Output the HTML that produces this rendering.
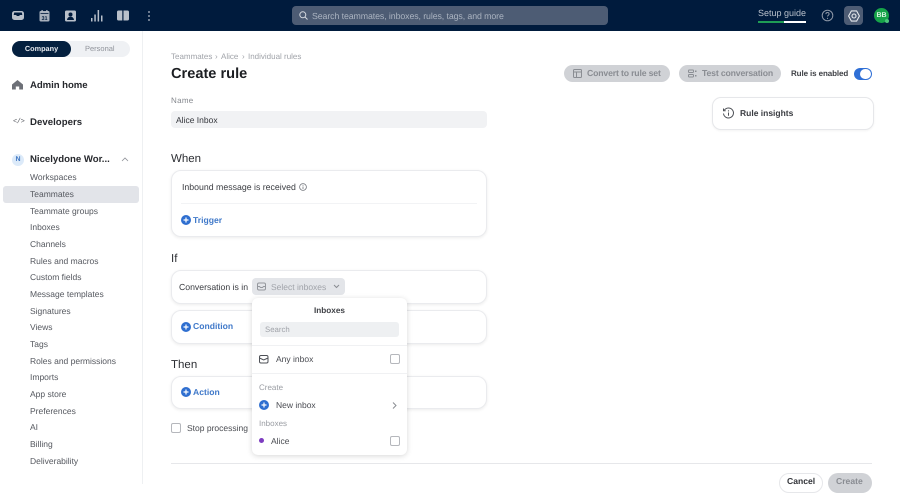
<!DOCTYPE html>
<html><head><meta charset="utf-8">
<style>
html,body{margin:0;padding:0;width:900px;height:484px;overflow:hidden;background:#fff;font-family:"Liberation Sans",sans-serif;color:#27292e;text-rendering:geometricPrecision}
*{box-sizing:border-box}
.a{position:absolute}
.t{position:absolute;white-space:nowrap;line-height:12px}
.nav{font-size:8.500px;color:#55585f;left:30px}
.h{font-size:11.500px;color:#2c2e33;left:171px;line-height:14px;font-weight:500}
.card{position:absolute;left:171px;width:316px;background:#fff;border:1px solid #eaebee;border-radius:10px;box-shadow:0 1px 3px rgba(0,0,0,.08)}
.pill{position:absolute;top:65px;height:17px;border-radius:9px;background:#d0d2d6}
.blue{color:#4079c9;font-size:8.600px;font-weight:bold}
.cb{position:absolute;width:10px;height:10px;border:1px solid #b5b7bc;border-radius:2px;background:#fff}
svg{position:absolute;display:block}
</style></head><body>
<div class="a" style="left:0;top:0;width:900px;height:31px;background:#001b3d"></div>

<svg style="left:12px;top:10px" width="12" height="11" viewBox="0 0 12 11"><rect x="0" y="1" width="12" height="9" rx="2.500" fill="#b9c0ca"/><path d="M2.200 2.500h7.600l.5 2.500H8L7 6H5L4 5H1.700z" fill="#001b3d"/></svg>
<svg style="left:39px;top:10px" width="11" height="12" viewBox="0 0 11 12"><rect x=".5" y="1" width="10" height="10.500" rx="1.200" fill="#a9b1bd"/><rect x="1.500" y="3" width="8" height=".8" fill="#001b3d"/><rect x="2.500" y="0" width="1.200" height="2" fill="#b9c0ca"/><rect x="7.300" y="0" width="1.200" height="2" fill="#b9c0ca"/><text x="5.500" y="10" text-anchor="middle" font-size="5.500" font-weight="bold" fill="#001b3d" font-family="Liberation Sans">31</text></svg>
<svg style="left:65px;top:10px" width="11" height="12" viewBox="0 0 11 12"><rect x="0" y=".5" width="11" height="11" rx="1.500" fill="#b9c0ca"/><circle cx="5.500" cy="4.500" r="2" fill="#001b3d"/><path d="M2 10c.3-2.400 1.700-3.300 3.500-3.300S8.700 7.600 9 10z" fill="#001b3d"/></svg>
<svg style="left:91px;top:9px" width="12" height="13" viewBox="0 0 12 13"><rect x="0" y="9" width="1.500" height="3.500" fill="#b9c0ca"/><rect x="3.300" y="5.500" width="1.500" height="7" fill="#b9c0ca"/><rect x="6.600" y="1" width="1.500" height="11.500" fill="#b9c0ca"/><rect x="10" y="6.500" width="1.500" height="6" fill="#b9c0ca"/></svg>
<svg style="left:117px;top:10px" width="12" height="11" viewBox="0 0 12 11"><path d="M0 2c0-1 .6-1.500 1.500-1.500h3.800v10H1.500C.6 10.500 0 10 0 9zM6.500.5h4c.9 0 1.500.5 1.500 1.500v7c0 1-.6 1.500-1.500 1.500h-4z" fill="#b9c0ca"/></svg>
<svg style="left:147px;top:11px" width="4" height="10" viewBox="0 0 4 10"><circle cx="2" cy="1" r=".9" fill="#b9c0ca"/><circle cx="2" cy="5" r=".9" fill="#b9c0ca"/><circle cx="2" cy="9" r=".9" fill="#b9c0ca"/></svg>

<div class="a" style="left:292px;top:6px;width:316px;height:19px;background:#4d5c74;border-radius:4px"></div>
<svg style="left:299px;top:11px" width="9" height="9" viewBox="0 0 9 9"><circle cx="3.800" cy="3.800" r="3" fill="none" stroke="#d5d9df" stroke-width="1"/><path d="M6 6l2.500 2.500" stroke="#d5d9df" stroke-width="1"/></svg>
<div class="t" style="left:312px;top:9.500px;font-size:8.800px;color:#aab3c0;letter-spacing:-.1px">Search teammates, inboxes, rules, tags, and more</div>

<div class="t" style="left:758px;top:7px;font-size:9px;color:#b8c0cb">Setup guide</div>
<div class="a" style="left:758px;top:20.500px;width:26px;height:2px;background:#1f9d55"></div>
<div class="a" style="left:784px;top:20.500px;width:22px;height:2px;background:#fff"></div>
<svg style="left:821px;top:9px" width="13" height="13" viewBox="0 0 13 13"><circle cx="6.500" cy="6.500" r="5.300" fill="none" stroke="#8d97a6"/><path d="M4.900 5.100c0-1 .7-1.600 1.600-1.600s1.600.6 1.600 1.500c0 1.300-1.600 1.300-1.600 2.500" fill="none" stroke="#8d97a6"/><circle cx="6.500" cy="9.400" r=".6" fill="#8d97a6"/></svg>
<div class="a" style="left:844px;top:6px;width:19px;height:19px;border-radius:4px;background:#4d5c74"></div>
<svg style="left:848px;top:10px" width="12" height="12" viewBox="0 0 12 12"><path d="M3.400.9h5.200L11.400 6 8.600 11.100H3.400L.6 6z" fill="none" stroke="#e6e9ed" stroke-width="1.100" stroke-linejoin="round"/><circle cx="6" cy="6" r="2" fill="none" stroke="#e6e9ed" stroke-width="1.100"/></svg>
<div class="a" style="left:874px;top:8px;width:15px;height:15px;border-radius:50%;background:#16a349;color:#d9f4e2;font-size:7px;font-weight:bold;text-align:center;line-height:15px">BB</div>
<div class="a" style="left:884.500px;top:19px;width:4px;height:4px;border-radius:50%;background:#4cc47a"></div>

<div class="a" style="left:142px;top:31px;width:1px;height:453px;background:#eef0f2"></div>
<div class="a" style="left:12px;top:41px;width:118px;height:16px;border-radius:8px;background:#eff1f4"></div>
<div class="a" style="left:12px;top:41px;width:59px;height:16px;border-radius:8px;background:#04203f;color:#e6e9ee;font-size:7.300px;font-weight:bold;text-align:center;line-height:16px">Company</div>
<div class="t" style="left:85px;top:43px;font-size:7.500px;color:#8f939a">Personal</div>

<svg style="left:12px;top:79px" width="11" height="11" viewBox="0 0 11 11"><path d="M5.500 1L11 5.500V10.500H7.200V7.500H3.800v3H0V5.500z" fill="#6d7077"/></svg>
<div class="t" style="left:30px;top:79.500px;font-size:9.600px;font-weight:bold;color:#26282d;letter-spacing:-.06px">Admin home</div>
<div class="t" style="left:13px;top:116px;font-size:7px;color:#55585f;font-family:'Liberation Mono',monospace;letter-spacing:-.4px">&lt;/&gt;</div>
<div class="t" style="left:30px;top:116.500px;font-size:9.600px;font-weight:bold;color:#26282d;letter-spacing:.04px">Developers</div>
<div class="a" style="left:12px;top:154px;width:12px;height:12px;border-radius:50%;background:#dceaf9;color:#3f76c2;font-size:7px;font-weight:bold;text-align:center;line-height:12px">N</div>
<div class="t" style="left:30px;top:154px;font-size:9.600px;font-weight:bold;color:#26282d">Nicelydone Wor...</div>
<svg style="left:121px;top:157px" width="8" height="5" viewBox="0 0 8 5"><path d="M1 4l3-3 3 3" fill="none" stroke="#8f9298" stroke-width=".8"/></svg>

<div class="a" style="left:3px;top:186px;width:136px;height:17px;border-radius:3px;background:#e2e4e9"></div>
<div class="t nav" style="top:171px">Workspaces</div>
<div class="t nav" style="top:188px">Teammates</div>
<div class="t nav" style="top:205px">Teammate groups</div>
<div class="t nav" style="top:221px">Inboxes</div>
<div class="t nav" style="top:238px">Channels</div>
<div class="t nav" style="top:255px">Rules and macros</div>
<div class="t nav" style="top:271px">Custom fields</div>
<div class="t nav" style="top:288px">Message templates</div>
<div class="t nav" style="top:305px">Signatures</div>
<div class="t nav" style="top:321px">Views</div>
<div class="t nav" style="top:338px">Tags</div>
<div class="t nav" style="top:355px">Roles and permissions</div>
<div class="t nav" style="top:371px">Imports</div>
<div class="t nav" style="top:388px">App store</div>
<div class="t nav" style="top:405px">Preferences</div>
<div class="t nav" style="top:421px">AI</div>
<div class="t nav" style="top:438px">Billing</div>
<div class="t nav" style="top:455px">Deliverability</div>

<div class="t" style="left:171px;top:51px;font-size:8px;color:#a0a3a9">Teammates</div>
<div class="t" style="left:215px;top:51px;font-size:8px;color:#a0a3a9">›</div>
<div class="t" style="left:221px;top:51px;font-size:8px;color:#a0a3a9">Alice</div>
<div class="t" style="left:242px;top:51px;font-size:8px;color:#a0a3a9">›</div>
<div class="t" style="left:248px;top:51px;font-size:8px;color:#a0a3a9">Individual rules</div>
<div class="t" style="left:171px;top:66px;font-size:14.600px;font-weight:bold;color:#1c1e22;line-height:16px">Create rule</div>

<div class="pill" style="left:564px;width:106px"></div>
<svg style="left:573px;top:69px" width="9" height="9" viewBox="0 0 9 9"><rect x=".5" y=".5" width="8" height="8" rx="1" fill="none" stroke="#8a8d93"/><path d="M.5 3h8M3.500 3v5.500" stroke="#8a8d93"/></svg>
<div class="t" style="left:587px;top:67px;font-size:8.700px;font-weight:bold;color:#8a8d93;letter-spacing:-.16px">Convert to rule set</div>
<div class="pill" style="left:679px;width:102px"></div>
<svg style="left:688px;top:69px" width="9" height="9" viewBox="0 0 9 9"><rect x=".5" y="1" width="5" height="2.500" rx=".7" fill="none" stroke="#8a8d93"/><rect x=".5" y="5.500" width="5" height="2.500" rx=".7" fill="none" stroke="#8a8d93"/><rect x="7" y="1.500" width="1.500" height="1.500" fill="#8a8d93"/><rect x="7" y="6" width="1.500" height="1.500" fill="#8a8d93"/></svg>
<div class="t" style="left:702px;top:67px;font-size:8.700px;font-weight:bold;color:#8a8d93;letter-spacing:-.16px">Test conversation</div>
<div class="t" style="left:791px;top:67.500px;font-size:8px;font-weight:bold;color:#3f4146;letter-spacing:-.1px">Rule is enabled</div>
<div class="a" style="left:854px;top:67.500px;width:18px;height:12px;border-radius:6px;background:#2f6fd6"></div>
<div class="a" style="left:860px;top:68.500px;width:10.500px;height:10px;border-radius:5px;background:#fff"></div>

<div class="a" style="left:712px;top:97px;width:162px;height:33px;border:1px solid #e6e7ea;border-radius:9px;background:#fff;box-shadow:0 1px 2px rgba(0,0,0,.05)"></div>
<svg style="left:722px;top:107px" width="13" height="13" viewBox="0 0 13 13"><path d="M2.300 3.200A5 5 0 1 1 1.500 6.500" fill="none" stroke="#4d5056"/><path d="M1.500 1.500v2.200h2.200" fill="none" stroke="#4d5056"/><path d="M6.500 5.500v3.200" stroke="#4d5056"/><circle cx="6.500" cy="3.900" r=".6" fill="#4d5056"/></svg>
<div class="t" style="left:740px;top:107px;font-size:8.500px;font-weight:bold;color:#3a3c41">Rule insights</div>

<div class="t" style="left:171px;top:95px;font-size:8px;color:#85888e;letter-spacing:.3px">Name</div>
<div class="a" style="left:171px;top:111px;width:316px;height:17px;border-radius:4px;background:#f1f2f4"></div>
<div class="t" style="left:176px;top:114px;font-size:8.500px;color:#35373c">Alice Inbox</div>

<div class="t h" style="top:152px">When</div>
<div class="card" style="top:170px;height:67px"></div>
<div class="t" style="left:182px;top:181px;font-size:8.750px;color:#3a3c41">Inbound message is received</div>
<svg style="left:299px;top:183px" width="8" height="8" viewBox="0 0 8 8"><circle cx="4" cy="4" r="3.400" fill="none" stroke="#70737a" stroke-width=".8"/><path d="M4 3.500v2.500" stroke="#70737a" stroke-width=".8"/><circle cx="4" cy="2.300" r=".5" fill="#70737a"/></svg>
<div class="a" style="left:181px;top:203px;width:296px;height:1px;background:#f2f3f5"></div>
<svg style="left:181px;top:215px" width="10" height="10" viewBox="0 0 10 10"><circle cx="5" cy="5" r="5" fill="#2f6fd0"/><path d="M5 2.500v5M2.500 5h5" stroke="#fff" stroke-width="1.200"/></svg>
<div class="t blue" style="left:193px;top:214px">Trigger</div>

<div class="t h" style="top:252px">If</div>
<div class="card" style="top:270px;height:34px"></div>
<div class="t" style="left:179px;top:281px;font-size:8.700px;color:#3a3c41">Conversation is in</div>
<div class="a" style="left:252px;top:278px;width:93px;height:17px;border-radius:4px;background:#e3e5e9"></div>
<svg style="left:257px;top:282px" width="9" height="9" viewBox="0 0 9 9"><rect x=".5" y="1" width="8" height="7" rx="1.500" fill="none" stroke="#94979d"/><path d="M.5 4.500h2l1 1h2l1-1h2" fill="none" stroke="#94979d"/></svg>
<div class="t" style="left:271px;top:281px;font-size:8.500px;color:#a0a3a9">Select inboxes</div>
<svg style="left:333px;top:284px" width="7" height="5" viewBox="0 0 7 5"><path d="M1 1l2.500 2.500L6 1" fill="none" stroke="#8a8d93"/></svg>

<div class="card" style="top:310px;height:34px"></div>
<svg style="left:181px;top:322px" width="10" height="10" viewBox="0 0 10 10"><circle cx="5" cy="5" r="5" fill="#2f6fd0"/><path d="M5 2.500v5M2.500 5h5" stroke="#fff" stroke-width="1.200"/></svg>
<div class="t blue" style="left:193px;top:320px">Condition</div>

<div class="t h" style="top:358px">Then</div>
<div class="card" style="top:376px;height:33px"></div>
<svg style="left:181px;top:387px" width="10" height="10" viewBox="0 0 10 10"><circle cx="5" cy="5" r="5" fill="#2f6fd0"/><path d="M5 2.500v5M2.500 5h5" stroke="#fff" stroke-width="1.200"/></svg>
<div class="t blue" style="left:193px;top:386px">Action</div>

<div class="cb" style="left:171px;top:423px"></div>
<div class="t" style="left:187px;top:422px;font-size:8.500px;color:#4a4c52">Stop processing</div>

<div class="a" style="left:171px;top:463px;width:701px;height:1px;background:#e6e7ea"></div>
<div class="a" style="left:779px;top:473px;width:44px;height:20px;border:1px solid #e6e7ea;border-radius:10px;background:#fff"></div>
<div class="t" style="left:787px;top:475px;font-size:8.600px;font-weight:bold;color:#33353a">Cancel</div>
<div class="a" style="left:828px;top:473px;width:44px;height:20px;border-radius:10px;background:#d0d2d6"></div>
<div class="t" style="left:836px;top:475px;font-size:8.600px;font-weight:bold;color:#8a8d93">Create</div>

<div class="a" style="left:252px;top:298px;width:155px;height:157px;background:#fff;border-radius:6px;box-shadow:0 1px 6px rgba(0,0,0,.16)"></div>
<div class="t" style="left:252px;top:304.500px;width:155px;text-align:center;font-size:8.200px;font-weight:bold;color:#3f4146">Inboxes</div>
<div class="a" style="left:260px;top:322px;width:139px;height:15px;border-radius:3px;background:#eef0f2"></div>
<div class="t" style="left:265px;top:324px;font-size:7.800px;color:#a0a3a9">Search</div>
<div class="a" style="left:252px;top:345px;width:155px;height:1px;background:#f0f1f3"></div>
<svg style="left:259px;top:354px" width="10" height="10" viewBox="0 0 10 10"><rect x=".5" y="1.500" width="8.500" height="7.500" rx="1.500" fill="none" stroke="#4d5056"/><path d="M.5 4l4.200 2L9 4" fill="none" stroke="#4d5056"/></svg>
<div class="t" style="left:276px;top:353px;font-size:8.500px;color:#4a4c52">Any inbox</div>
<div class="cb" style="left:390px;top:354px"></div>
<div class="a" style="left:252px;top:373px;width:155px;height:1px;background:#f0f1f3"></div>
<div class="t" style="left:259px;top:381.500px;font-size:8px;color:#9a9da3">Create</div>
<svg style="left:259px;top:400px" width="10" height="10" viewBox="0 0 10 10"><circle cx="5" cy="5" r="5" fill="#2f6fd0"/><path d="M5 2.500v5M2.500 5h5" stroke="#fff" stroke-width="1.200"/></svg>
<div class="t" style="left:276px;top:399px;font-size:8.500px;color:#4a4c52">New inbox</div>
<svg style="left:392px;top:402px" width="5" height="7" viewBox="0 0 5 7"><path d="M1 .5l3 3-3 3" fill="none" stroke="#8a8d93"/></svg>
<div class="t" style="left:259px;top:417.500px;font-size:8px;color:#9a9da3">Inboxes</div>
<div class="a" style="left:259px;top:438px;width:5px;height:5px;border-radius:50%;background:#7d3cc0"></div>
<div class="t" style="left:271px;top:435px;font-size:8.500px;color:#4a4c52">Alice</div>
<div class="cb" style="left:390px;top:436px"></div>
</body></html>
